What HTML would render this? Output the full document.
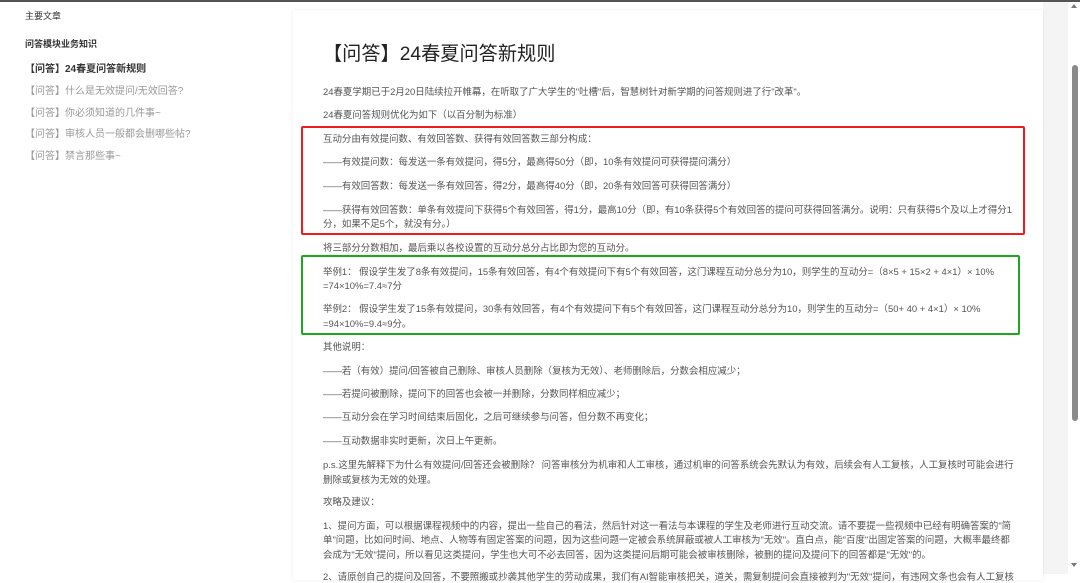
<!DOCTYPE html>
<html><head><meta charset="utf-8"><style>
*{margin:0;padding:0;box-sizing:border-box}
body{width:1080px;height:574px;overflow:hidden;background:#fff;font-family:"Liberation Sans","Noto Sans CJK SC",sans-serif;position:relative}
.topbar{position:absolute;left:0;top:0;width:1080px;height:2px;background:#555}
.side{position:absolute;left:0;top:2px;width:293px;height:572px;background:#fff}
.s{position:absolute;white-space:nowrap;font-size:10px;color:#999}
.right{position:absolute;left:1043px;top:2px;width:25px;height:572px;background:#f4f4f4}
.card{position:absolute;left:293px;top:10px;width:750px;height:570px;background:#fff;box-shadow:0 0 3px rgba(0,0,0,.08)}
.sb{position:absolute;left:1068px;top:2px;width:12px;height:572px;background:#fff}
.thumb{position:absolute;left:1072px;top:65px;width:6px;height:356px;background:#8a8a8a;border-radius:3px}
.t{position:absolute;left:323px;white-space:nowrap;font-size:9.45px;color:#555}
.h1{position:absolute;left:323px;top:38px;font-size:19.2px;color:#222;white-space:nowrap}
.red{position:absolute;left:301px;top:126px;width:724px;height:109px;border:2px solid #f01b1b;border-radius:2px}
.green{position:absolute;left:301px;top:255px;width:719px;height:80px;border:2px solid #1fa81f;border-radius:2px}
</style></head><body>
<div class="topbar"></div>
<div class="side">
<div class="s" style="left:25px;top:7px;color:#333;font-size:9px">主要文章</div>
<div class="s" style="left:25px;top:35px;color:#333;font-weight:bold;font-size:9px">问答模块业务知识</div>
<div class="s" style="left:25px;top:58px;color:#333;font-weight:bold">【问答】24春夏问答新规则</div>
<div class="s" style="left:25px;top:80px">【问答】什么是无效提问/无效回答?</div>
<div class="s" style="left:25px;top:102px">【问答】你必须知道的几件事~</div>
<div class="s" style="left:25px;top:123px">【问答】审核人员一般都会删哪些帖?</div>
<div class="s" style="left:25px;top:145px">【问答】禁言那些事~</div>
</div>
<div class="right"></div>
<div class="card"></div>
<div class="sb"></div>
<div class="thumb"></div>
<div style="position:absolute;left:1071px;top:4px;width:0;height:0;border-left:3px solid transparent;border-right:3px solid transparent;border-bottom:4px solid #777"></div>
<div style="position:absolute;left:1071px;top:563px;width:0;height:0;border-left:3px solid transparent;border-right:3px solid transparent;border-top:4px solid #777"></div>
<div class="h1">【问答】24春夏问答新规则</div>
<div class="red"></div><div class="green"></div>
<div class="t" style="top:84px">24春夏学期已于2月20日陆续拉开帷幕，在听取了广大学生的"吐槽"后，智慧树针对新学期的问答规则进了行"改革"。</div>
<div class="t" style="top:107px">24春夏问答规则优化为如下（以百分制为标准）</div>
<div class="t" style="top:131px">互动分由有效提问数、有效回答数、获得有效回答数三部分构成：</div>
<div class="t" style="top:154px">——有效提问数：每发送一条有效提问，得5分，最高得50分（即，10条有效提问可获得提问满分）</div>
<div class="t" style="top:178px">——有效回答数：每发送一条有效回答，得2分，最高得40分（即，20条有效回答可获得回答满分）</div>
<div class="t" style="top:202px">——获得有效回答数：单条有效提问下获得5个有效回答，得1分，最高10分（即，有10条获得5个有效回答的提问可获得回答满分。说明：只有获得5个及以上才得分1</div>
<div class="t" style="top:216px">分，如果不足5个，就没有分。）</div>
<div class="t" style="top:240px">将三部分分数相加，最后乘以各校设置的互动分总分占比即为您的互动分。</div>
<div class="t" style="top:264px">举例1： 假设学生发了8条有效提问，15条有效回答，有4个有效提问下有5个有效回答，这门课程互动分总分为10，则学生的互动分=（8×5 + 15×2 + 4×1）× 10%</div>
<div class="t" style="top:278px">=74×10%=7.4≈7分</div>
<div class="t" style="top:301px">举例2： 假设学生发了15条有效提问，30条有效回答，有4个有效提问下有5个有效回答，这门课程互动分总分为10，则学生的互动分=（50+ 40 + 4×1）× 10%</div>
<div class="t" style="top:316px">=94×10%=9.4≈9分。</div>
<div class="t" style="top:339px">其他说明：</div>
<div class="t" style="top:363px">——若（有效）提问/回答被自己删除、审核人员删除（复核为无效）、老师删除后，分数会相应减少；</div>
<div class="t" style="top:386px">——若提问被删除，提问下的回答也会被一并删除，分数同样相应减少；</div>
<div class="t" style="top:409px">——互动分会在学习时间结束后固化，之后可继续参与问答，但分数不再变化；</div>
<div class="t" style="top:433px">——互动数据非实时更新，次日上午更新。</div>
<div class="t" style="top:457px">p.s.这里先解释下为什么有效提问/回答还会被删除？ 问答审核分为机审和人工审核，通过机审的问答系统会先默认为有效，后续会有人工复核，人工复核时可能会进行</div>
<div class="t" style="top:472px">删除或复核为无效的处理。</div>
<div class="t" style="top:494px">攻略及建议：</div>
<div class="t" style="top:518px">1、提问方面，可以根据课程视频中的内容，提出一些自己的看法，然后针对这一看法与本课程的学生及老师进行互动交流。请不要提一些视频中已经有明确答案的"简</div>
<div class="t" style="top:532px">单"问题，比如问时间、地点、人物等有固定答案的问题，因为这些问题一定被会系统屏蔽或被人工审核为"无效"。直白点，能"百度"出固定答案的问题，大概率最终都</div>
<div class="t" style="top:547px">会成为"无效"提问，所以看见这类提问，学生也大可不必去回答，因为这类提问后期可能会被审核删除，被删的提问及提问下的回答都是"无效"的。</div>
<div class="t" style="top:569px">2、请原创自己的提问及回答，不要照搬或抄袭其他学生的劳动成果，我们有AI智能审核把关，道关，需复制提问会直接被判为"无效"提问，有违网文条也会有人工复核</div>
</body></html>
